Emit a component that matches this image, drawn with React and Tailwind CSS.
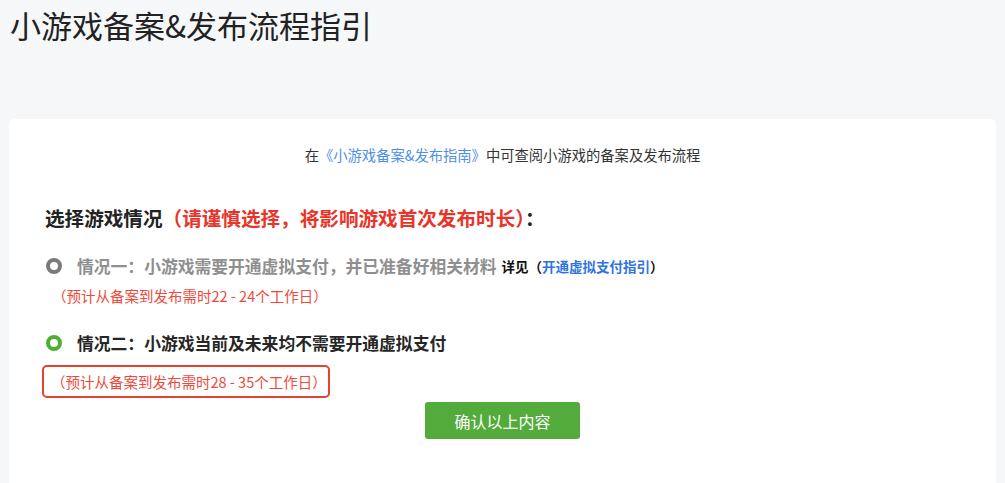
export default function App() {
  return (
    <div
      className="h-[483px] w-[1005px] overflow-hidden bg-[#f6f7f9]"
      style={{ fontFamily: '"Noto Sans CJK SC", "Liberation Sans", sans-serif' }}
    >
      <h1 className="pl-[10px] pt-[4px] text-[31px] leading-[42px] font-normal text-[#222]">
        小游戏备案&发布流程指引
      </h1>

      <div className="mx-[9px] mt-[73px] h-[400px] rounded-[5px] bg-white pl-[36px]">
        <p className="pt-[26px] pr-[36px] text-center text-[14.3px] leading-[20px] text-[#333]">
          在<span className="text-[#4f8fe6]">《小游戏备案&发布指南》</span>中可查阅小游戏的备案及发布流程
        </p>

        <h2 className="mt-[40px] text-[19.6px] leading-[26px] font-bold text-[#222]">
          选择游戏情况<span className="text-[#e8352b]">（请谨慎选择，将影响游戏首次发布时长）</span>：
        </h2>

        <div className="mt-[23px] flex items-center">
          <span className="ml-[1px] h-[16px] w-[16px] shrink-0 rounded-full border-[4px] border-[#7a7a7a]" />
          <span className="ml-[15px] text-[16.8px] leading-[24px] font-bold text-[#8f8f8f]">
            情况一：小游戏需要开通虚拟支付，并已准备好相关材料
          </span>
          <span className="ml-[5px] text-[13.5px] leading-[24px] font-bold text-[#111]">
            详见（<span className="text-[#2f74e0]">开通虚拟支付指引</span>）
          </span>
        </div>
        <p className="mt-[8px] pl-[7px] text-[14.5px] leading-[20px] text-[#ee4a3c]">
          （预计从备案到发布需时22 - 24个工作日）
        </p>

        <div className="mt-[25px] flex items-center">
          <span className="ml-[1px] h-[16px] w-[16px] shrink-0 rounded-full border-[4px] border-[#4fae35]" />
          <span className="ml-[15px] text-[16.8px] leading-[24px] font-bold text-[#262626]">
            情况二：小游戏当前及未来均不需要开通虚拟支付
          </span>
        </div>
        <div className="mt-[10px] ml-[-3px] flex h-[33px] w-[288px] items-center rounded-[5px] border-[2.5px] border-[#e4432f] pl-[7px]">
          <span className="text-[14.5px] leading-[20px] text-[#ee4a3c]">
            （预计从备案到发布需时28 - 35个工作日）
          </span>
        </div>

        <div className="mt-[4px] flex justify-center pr-[36px]">
          <button className="h-[37px] w-[155px] rounded-[3px] bg-[#53ab3b] text-[16px] text-white">
            确认以上内容
          </button>
        </div>
      </div>
    </div>
  );
}
